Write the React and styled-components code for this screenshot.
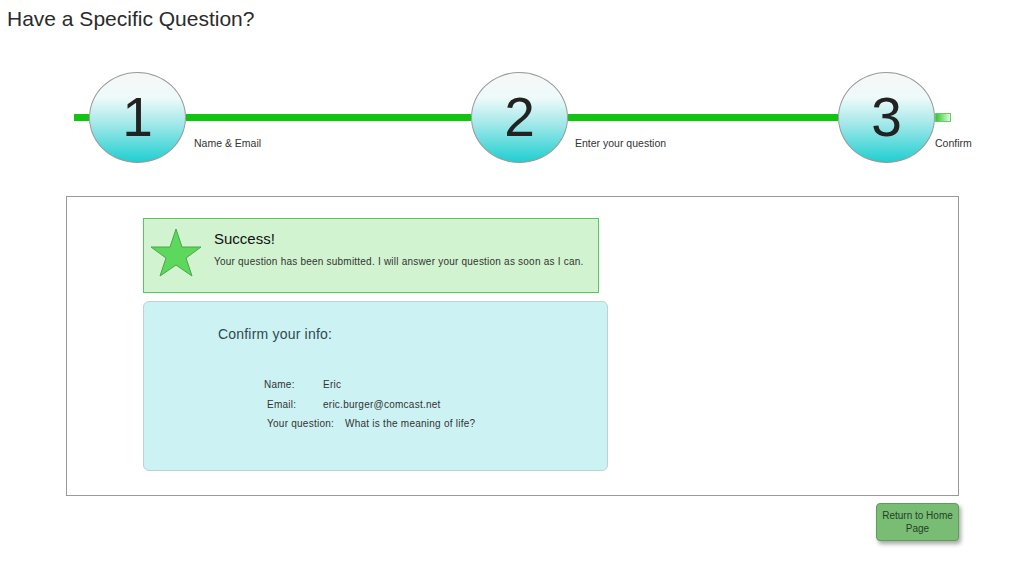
import React from "react";
import styled, { createGlobalStyle } from "styled-components";

const GlobalStyle = createGlobalStyle`
  body {
    margin: 0;
    background: #fff;
    font-family: "Liberation Sans", Arial, sans-serif;
    color: #333;
  }
`;

const Page = styled.div`
  width: 1027px;
  height: 583px;
  display: flex;
  flex-direction: column;
`;

const Title = styled.h1`
  margin: 7px 0 0 7px;
  font-size: 21px;
  font-weight: normal;
  line-height: 24px;
  color: #2b2b2b;
`;

const Stepper = styled.div`
  display: flex;
  align-items: center;
  margin: 41px 0 0 74px;
  height: 90px;
`;

const Segment = styled.div`
  width: ${(p) => p.$w}px;
  height: 7px;
  background: #11c411;
`;

const Tail = styled.div`
  width: 14px;
  height: 7px;
  border: 1px solid #6c6;
  background: linear-gradient(to right, #2fcb2f, #dff7df);
`;

const Step = styled.div`
  position: relative;
  flex: none;
`;

const Circle = styled.div`
  width: 95px;
  height: 89px;
  border: 1px solid #9a9a9a;
  border-radius: 50%;
  display: flex;
  align-items: center;
  justify-content: center;
  background: linear-gradient(
    to bottom,
    #f7f7f7 0%,
    #eefafa 28%,
    #a9e9ea 55%,
    #1fcfd1 100%
  );
  font-size: 55px;
  color: #222;
`;

const StepLabel = styled.span`
  position: absolute;
  left: calc(100% + ${(p) => p.$offset}px);
  top: 65px;
  white-space: nowrap;
  font-size: 10.5px;
  color: #333;
`;

const Main = styled.div`
  margin: 34px 0 0 66px;
  width: 893px;
  height: 300px;
  border: 1px solid #999;
  padding: 21px 0 0 76px;
  box-sizing: border-box;
  display: flex;
  flex-direction: column;
  gap: 8px;
`;

const SuccessBox = styled.div`
  width: 456px;
  height: 75px;
  box-sizing: border-box;
  border: 1px solid #5cc65c;
  background: #d2f3d0;
  display: flex;
  align-items: flex-start;
`;

const StarIcon = styled.svg`
  flex: none;
  margin: 9px 12px 0 6px;
`;

const SuccessText = styled.div`
  display: flex;
  flex-direction: column;
  padding-top: 11px;
`;

const SuccessTitle = styled.div`
  font-size: 15px;
  color: #111;
  line-height: 18px;
`;

const SuccessMsg = styled.div`
  margin-top: 8px;
  font-size: 10px;
  color: #333;
  letter-spacing: 0.22px;
  white-space: nowrap;
`;

const ConfirmBox = styled.div`
  width: 465px;
  height: 170px;
  box-sizing: border-box;
  border: 1px solid #b9d3d6;
  border-radius: 6px;
  background: #cdf2f3;
  display: flex;
  flex-direction: column;
  padding-left: 74px;
`;

const ConfirmTitle = styled.div`
  margin-top: 24px;
  font-size: 14px;
  letter-spacing: 0.2px;
  color: #2f4a4f;
`;

const InfoList = styled.div`
  margin-top: 37px;
  display: flex;
  flex-direction: column;
  gap: 7.5px;
  font-size: 10px;
  letter-spacing: 0.25px;
  color: #333;
`;

const InfoRow = styled.div`
  display: flex;
  line-height: 12px;
  padding-left: ${(p) => p.$indent}px;
`;

const InfoKey = styled.span`
  width: ${(p) => p.$w}px;
  flex: none;
`;

const ButtonRow = styled.div`
  display: flex;
  justify-content: flex-end;
  width: 959px;
  margin-top: 7px;
`;

const HomeButton = styled.button`
  width: 83px;
  height: 38px;
  border: 1px solid #5e9c58;
  border-radius: 4px;
  background: #79bd74;
  box-shadow: 2px 3px 4px rgba(0, 0, 0, 0.35);
  font-family: "Liberation Sans", Arial, sans-serif;
  font-size: 10px;
  line-height: 13px;
  color: #24402a;
  padding: 0 2px;
  cursor: pointer;
`;

const steps = [
  { n: 1, label: "Name & Email", offset: 8 },
  { n: 2, label: "Enter your question", offset: 7 },
  { n: 3, label: "Confirm", offset: 0 },
];

const gaps = [285, 270];

const App = () => {
  return (
    <Page>
      <GlobalStyle />
      <Title>Have a Specific Question?</Title>

      <Stepper>
        <Segment $w={15} />
        {steps.map((s, i) => (
          <React.Fragment key={s.n}>
            <Step>
              <Circle>{s.n}</Circle>
              <StepLabel $offset={s.offset}>{s.label}</StepLabel>
            </Step>
            {i < gaps.length ? <Segment $w={gaps[i]} /> : <Tail />}
          </React.Fragment>
        ))}
      </Stepper>

      <Main>
        <SuccessBox>
          <StarIcon width="52" height="50" viewBox="0 0 52 50">
            <polygon
              points="26,1 32,19 51,19 36,30 42,48 26,37 10,48 16,30 1,19 20,19"
              fill="#5cd85c"
              stroke="#4aa64a"
              strokeWidth="1"
              strokeLinejoin="round"
            />
          </StarIcon>
          <SuccessText>
            <SuccessTitle>Success!</SuccessTitle>
            <SuccessMsg>
              Your question has been submitted. I will answer your question as soon as I can.
            </SuccessMsg>
          </SuccessText>
        </SuccessBox>

        <ConfirmBox>
          <ConfirmTitle>Confirm your info:</ConfirmTitle>
          <InfoList>
            <InfoRow $indent={46}>
              <InfoKey $w={59}>Name:</InfoKey>
              <span>Eric</span>
            </InfoRow>
            <InfoRow $indent={49}>
              <InfoKey $w={56}>Email:</InfoKey>
              <span>eric.burger@comcast.net</span>
            </InfoRow>
            <InfoRow $indent={49}>
              <InfoKey $w={78}>Your question:</InfoKey>
              <span>What is the meaning of life?</span>
            </InfoRow>
          </InfoList>
        </ConfirmBox>
      </Main>

      <ButtonRow>
        <HomeButton>Return to Home Page</HomeButton>
      </ButtonRow>
    </Page>
  );
};

export default App;
